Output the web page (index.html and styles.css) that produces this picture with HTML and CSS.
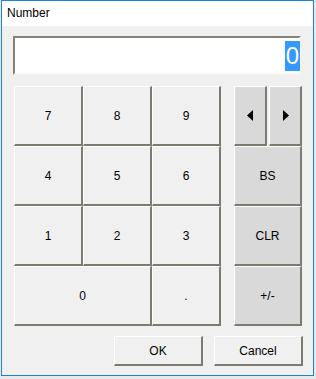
FILE: index.html
```html
<!DOCTYPE html>
<html lang="en">

<head>
    <meta charset="UTF-8">
    <meta name="viewport" content="width=device-width, initial-scale=1.0">
    <title>Number</title>
    <link rel="stylesheet" href="styles.css">
</head>

<body>
    <div class="window">
        <div class="titlebar">Number</div>

        <div class="content">
            <div class="display"><span class="value">0</span></div>

            <div class="pad">
                <div class="keys">
                    <button class="key">7</button>
                    <button class="key">8</button>
                    <button class="key">9</button>
                    <button class="key">4</button>
                    <button class="key">5</button>
                    <button class="key">6</button>
                    <button class="key">1</button>
                    <button class="key">2</button>
                    <button class="key">3</button>
                    <button class="key wide">0</button>
                    <button class="key">.</button>
                </div>

                <div class="side">
                    <div class="arrows">
                        <button class="key op arrow">
                            <svg width="7" height="11" viewBox="0 0 7 11"><polygon points="6,0 0,5.5 6,11" fill="#000"/></svg>
                        </button>
                        <button class="key op arrow">
                            <svg width="7" height="11" viewBox="0 0 7 11"><polygon points="1,0 7,5.5 1,11" fill="#000"/></svg>
                        </button>
                    </div>
                    <button class="key op">BS</button>
                    <button class="key op">CLR</button>
                    <button class="key op">+/-</button>
                </div>
            </div>

            <div class="footer">
                <button class="key dlg">OK</button>
                <button class="key dlg">Cancel</button>
            </div>
        </div>
    </div>
</body>

</html>
```

FILE: styles.css
```css
body {
    margin: 0;
    background-color: #e9e9e9;
    font-family: "Liberation Sans", Arial, sans-serif;
    font-size: 12px;
    color: #000;
}

.window {
    margin-left: 1px;
    width: 311px;
    height: 374px;
    border: 1px solid #1883d7;
    background-color: #f0f0f0;
    display: flex;
    flex-direction: column;
}

.titlebar {
    height: 25px;
    line-height: 25px;
    padding-left: 5px;
    background-color: #fff;
    font-size: 12px;
}

.content {
    padding: 10px 0 0 11px;
    width: 290px;
}

.display {
    width: 284px;
    height: 35px;
    border: 2px solid;
    border-color: #85837a #f6f6f2 #f6f6f2 #85837a;
    background-color: #fff;
    display: flex;
    align-items: center;
    justify-content: flex-end;
}

.value {
    background-color: #3399ff;
    color: #fff;
    font-size: 24px;
    line-height: 30px;
    height: 30px;
    padding: 0 1px;
    margin-right: -1px;
}

.pad {
    display: flex;
    gap: 13px;
    margin: 11px 0 0 1px;
}

.keys {
    display: grid;
    grid-template-columns: repeat(3, 69px);
    grid-auto-rows: 60px;
}

.key {
    box-sizing: border-box;
    margin: 0;
    padding: 0;
    border-style: solid;
    border-width: 1px 2px 2px 1px;
    border-color: #fff #7c7b72 #7c7b72 #fff;
    background-color: #f0f0f0;
    font-family: inherit;
    font-size: 12px;
    color: #000;
    display: flex;
    align-items: center;
    justify-content: center;
}

.wide {
    grid-column: span 2;
}

.side {
    display: grid;
    grid-template-columns: 68px;
    grid-auto-rows: 60px;
}

.op {
    background-color: #d9d9d9;
}

.arrows {
    display: flex;
    gap: 2px;
}

.arrow {
    width: 33px;
    height: 60px;
}

.footer {
    display: flex;
    justify-content: flex-end;
    gap: 11px;
    margin-top: 10px;
}

.dlg {
    width: 89px;
    height: 30px;
}
```
